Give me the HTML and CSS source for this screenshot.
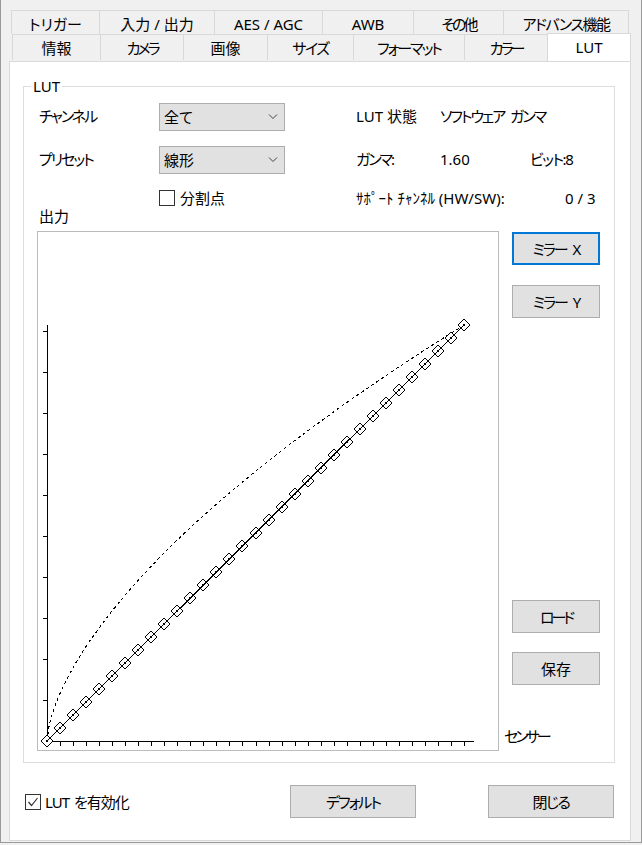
FILE: index.html
```html
<!DOCTYPE html>
<html lang="ja">
<head>
<meta charset="utf-8">
<title>LUT</title>
<link rel="stylesheet" href="styles.css">
</head>
<body>
<div class="window">
  <div class="tabrow row1">
    <div class="tab">トリガー</div>
    <div class="tab">入力 / 出力</div>
    <div class="tab">AES / AGC</div>
    <div class="tab">AWB</div>
    <div class="tab"><span class="k3">その他</span></div>
    <div class="tab"><span class="k15">アドバンス機能</span></div>
  </div>
  <div class="tabrow row2">
    <div class="tab">情報</div>
    <div class="tab"><span class="k3">カメラ</span></div>
    <div class="tab">画像</div>
    <div class="tab"><span class="k15">サイズ</span></div>
    <div class="tab"><span class="k2">フォーマット</span></div>
    <div class="tab"><span class="k3">カラー</span></div>
    <div class="tab active">LUT</div>
  </div>
  <div class="panel">
    <fieldset class="group">
      <legend>LUT</legend>
      <div class="frow row-a">
        <span class="c-lbl k2">チャンネル</span>
        <div class="c-ctl">
          <div class="combo"><span>全て</span><svg class="chev" width="10" height="6" viewBox="0 0 10 6"><path d="M1 0.5 L5 4.5 L9 0.5" /></svg></div>
        </div>
        <span class="c-k">LUT 状態</span>
        <span class="c-v k2">ソフトウェア ガンマ</span>
      </div>
      <div class="frow row-b">
        <span class="c-lbl k2">プリセット</span>
        <div class="c-ctl">
          <div class="combo"><span>線形</span><svg class="chev" width="10" height="6" viewBox="0 0 10 6"><path d="M1 0.5 L5 4.5 L9 0.5" /></svg></div>
        </div>
        <span class="c-k k2">ガンマ:</span>
        <span class="c-v">1.60</span>
        <span class="k15">ビット:8</span>
      </div>
      <div class="frow row-c">
        <span class="c-lbl"></span>
        <label class="c-ctl check"><span class="cb"></span><span>分割点</span></label>
        <span class="c-k2">ｻﾎﾟｰﾄ ﾁｬﾝﾈﾙ (HW/SW):</span>
        <span>0 / 3</span>
      </div>
      <div class="out-label">出力</div>
      <div class="graph-row">
        <div class="graph">
          <svg width="460" height="518" viewBox="38 233 460 518">
            <defs>
              <g id="dm">
                <path d="M0,-6 L6,0 L0,6 L-6,0 Z" fill="#fff" stroke="#000" stroke-width="1" shape-rendering="crispEdges"/>
                <rect x="-1" y="-1" width="2" height="2" fill="#000"/>
              </g>
            </defs>
            <g class="axes">
              <path d="M47.5,326V743 M47,742.5H474"/>
              <path d="M43,701.5H47 M43,660.5H47 M43,619.5H47 M43,578.5H47 M43,537.5H47 M43,496.5H47 M43,455.5H47 M43,414.5H47 M43,373.5H47 M43,332.5H47"/>
              <path d="M60.5,742V747 M73.5,742V747 M86.5,742V747 M99.5,742V747 M112.5,742V747 M125.5,742V747 M138.5,742V747 M151.5,742V747 M164.5,742V747 M177.5,742V747 M190.5,742V747 M203.5,742V747 M216.5,742V747 M229.5,742V747 M242.5,742V747 M256.5,742V747 M269.5,742V747 M282.5,742V747 M295.5,742V747 M308.5,742V747 M321.5,742V747 M334.5,742V747 M347.5,742V747 M360.5,742V747 M373.5,742V747 M386.5,742V747 M399.5,742V747 M412.5,742V747 M425.5,742V747 M438.5,742V747 M451.5,742V747 M464.5,742V747"/>
            </g>
            <path class="gamma" d="M47,742 L49.1,726.8 L51.2,718.6 L55.3,705.9 L59.5,695.5 L67.9,678 L78.3,659.6 L88.7,643.4 L109.6,614.9 L130.4,589.9 L151.3,567.1 L172.1,546 L193,526.1 L213.8,507.4 L234.7,489.5 L255.5,472.3 L276.4,455.7 L297.2,439.7 L318.1,424.2 L338.9,409.1 L359.8,394.5 L380.6,380.2 L401.5,366.2 L422.3,352.5 L443.2,339.2 L464,326"/>
            <g class="pts">
              <use href="#dm" x="47" y="742"/><use href="#dm" x="60" y="729"/><use href="#dm" x="73" y="716"/><use href="#dm" x="86" y="703"/>
              <use href="#dm" x="99" y="690"/><use href="#dm" x="112" y="677"/><use href="#dm" x="125" y="664"/><use href="#dm" x="138" y="651"/>
              <use href="#dm" x="151" y="638"/><use href="#dm" x="164" y="625"/><use href="#dm" x="177" y="612"/><use href="#dm" x="190" y="599"/>
              <use href="#dm" x="203" y="586"/><use href="#dm" x="216" y="573"/><use href="#dm" x="229" y="560"/><use href="#dm" x="242" y="547"/>
              <use href="#dm" x="256" y="534"/><use href="#dm" x="269" y="521"/><use href="#dm" x="282" y="508"/><use href="#dm" x="295" y="495"/>
              <use href="#dm" x="308" y="482"/><use href="#dm" x="321" y="469"/><use href="#dm" x="334" y="456"/><use href="#dm" x="347" y="443"/>
              <use href="#dm" x="360" y="430"/><use href="#dm" x="373" y="417"/><use href="#dm" x="386" y="404"/><use href="#dm" x="399" y="391"/>
              <use href="#dm" x="412" y="378"/><use href="#dm" x="425" y="365"/><use href="#dm" x="438" y="352"/><use href="#dm" x="451" y="339"/>
              <use href="#dm" x="464" y="326"/>
            </g>
            <path class="lin" d="M47,742 L464,326"/>
          </svg>
        </div>
        <div class="side">
          <button class="btn focus"><span class="k2">ミラー X</span></button>
          <button class="btn b-y"><span class="k2">ミラー Y</span></button>
          <button class="btn b-load"><span class="k3">ロード</span></button>
          <button class="btn b-save">保存</button>
          <span class="sensor k3">センサー</span>
        </div>
      </div>
    </fieldset>
    <div class="bottom">
      <label class="enable check"><span class="cb"><svg width="14" height="14" viewBox="0 0 14 14"><path d="M2.5 7 L5.5 10.5 L11.5 3"/></svg></span><span class="k1">LUT を有効化</span></label>
      <button class="btn wide"><span class="k2">デフォルト</span></button>
      <button class="btn wide close"><span class="k15">閉じる</span></button>
    </div>
  </div>
</div>
</body>
</html>
```

FILE: styles.css
```css
html, body {
  margin: 0;
  padding: 0;
}
body {
  background: #f0f0f0;
  font-family: "Noto Sans", "Noto Sans CJK JP", sans-serif;
  font-size: 15px;
  line-height: 18px;
  color: #000;
  font-feature-settings: "palt";
  width: 642px;
  height: 845px;
  overflow: hidden;
}
.k1 { letter-spacing: -1px; word-spacing: 2px; }
.k15 { letter-spacing: -1.5px; word-spacing: 3px; }
.k2 { letter-spacing: -2px; word-spacing: 4px; }
.k3 { letter-spacing: -3px; word-spacing: 5px; }
.window {
  width: 642px;
  height: 843px;
  box-sizing: border-box;
  border: 1px solid #9a9a9a;
  border-top: none;
  padding-top: 10px;
  background: #f0f0f0;
}
.tabrow {
  display: grid;
  align-items: start;
}
.row1 {
  margin-left: 10px;
  grid-template-columns: 88px 115px 108px 91px 90px 126px;
}
.row2 {
  margin-left: 11px;
  grid-template-columns: 88px 83px 84px 86px 111px 83px 84px;
}
.tab {
  box-sizing: border-box;
  border-top: 1px solid #d9d9d9;
  border-left: 1px solid #d9d9d9;
  background: #f0f0f0;
  text-align: center;
  padding-top: 4px;
  white-space: nowrap;
}
.tab:last-child {
  border-right: 1px solid #d9d9d9;
}
.row1 .tab {
  height: 24px;
}
.row2 .tab {
  height: 26px;
}
.row2 .tab.active {
  margin-top: -1px;
  height: 28px;
  background: #fff;
  position: relative;
  z-index: 2;
  padding-top: 4px;
}
.panel {
  position: relative;
  margin-left: 8px;
  width: 622px;
  height: 780px;
  box-sizing: border-box;
  background: #fff;
  border: 1px solid #d9d9d9;
}
.group {
  margin: 15px 0 0 13px;
  width: 592px;
  box-sizing: border-box;
  border: 1px solid #dcdcdc;
  padding: 8px 0 11px 0;
  min-inline-size: 0;
}
.group legend {
  margin-left: 7px;
  padding: 0 2px;
  line-height: 18px;
}
.frow {
  display: flex;
  align-items: center;
  padding-left: 15px;
  white-space: nowrap;
}
.row-a, .row-b {
  height: 28px;
}
.row-a > span, .row-b > span {
  position: relative;
  top: -1px;
}
.row-b {
  margin-top: 15px;
}
.row-c {
  height: 16px;
  margin-top: 16px;
}
.c-lbl {
  width: 120px;
  flex: none;
}
.c-ctl {
  width: 197px;
  flex: none;
}
.c-k {
  width: 84px;
  flex: none;
}
.c-v {
  width: 90px;
  flex: none;
}
.c-k2 {
  width: 209px;
  flex: none;
}
.combo {
  width: 126px;
  height: 28px;
  box-sizing: border-box;
  background: #e1e1e1;
  border: 1px solid #adadad;
  display: flex;
  align-items: center;
  justify-content: space-between;
  padding: 0 6px 0 4px;
}
.chev path {
  fill: none;
  stroke: #444;
  stroke-width: 1;
}
.check {
  display: flex;
  align-items: center;
  gap: 5px;
}
.cb {
  width: 16px;
  height: 16px;
  box-sizing: border-box;
  border: 1px solid #333;
  background: #fff;
  flex: none;
  display: flex;
  align-items: center;
  justify-content: center;
}
.cb svg path {
  fill: none;
  stroke: #333;
  stroke-width: 1.2;
}
.out-label {
  padding-left: 15px;
  margin-top: 1px;
  height: 18px;
}
.graph-row {
  display: flex;
  margin-top: 6px;
}
.graph {
  margin-left: 13px;
  width: 462px;
  height: 520px;
  box-sizing: border-box;
  border: 1px solid #bcbcbc;
  background: #fff;
  flex: none;
}
.graph svg {
  display: block;
}
.axes path {
  fill: none;
  stroke: #000;
  stroke-width: 1;
  shape-rendering: crispEdges;
}
.gamma {
  fill: none;
  stroke: #000;
  stroke-width: 1;
  stroke-dasharray: 3 3;
  shape-rendering: crispEdges;
}
.lin {
  fill: none;
  stroke: #000;
  stroke-width: 1;
  shape-rendering: crispEdges;
}
.side {
  display: flex;
  flex-direction: column;
  align-items: flex-start;
  margin-left: 5px;
  height: 520px;
}
.btn {
  font: inherit;
  color: #000;
  background: #e1e1e1;
  border: 1px solid #adadad;
  box-sizing: border-box;
  width: 88px;
  height: 33px;
  padding: 0;
  margin: 0;
  text-align: center;
  white-space: nowrap;
}
.side .btn {
  margin-left: 8px;
}
.btn.focus {
  border: 2px solid #0078d7;
  margin-top: 1px;
}
.btn.b-y {
  margin-top: 20px;
}
.btn.b-load {
  margin-top: 282px;
}
.btn.b-save {
  margin-top: 19px;
}
.sensor {
  margin-top: 42px;
}
.bottom {
  display: flex;
  align-items: center;
  margin-top: 22px;
  padding-left: 15px;
  height: 33px;
}
.enable {
  width: 265px;
  gap: 4px;
  flex: none;
}
.btn.wide {
  width: 126px;
  flex: none;
}
.btn.close {
  margin-left: 72px;
}
```
